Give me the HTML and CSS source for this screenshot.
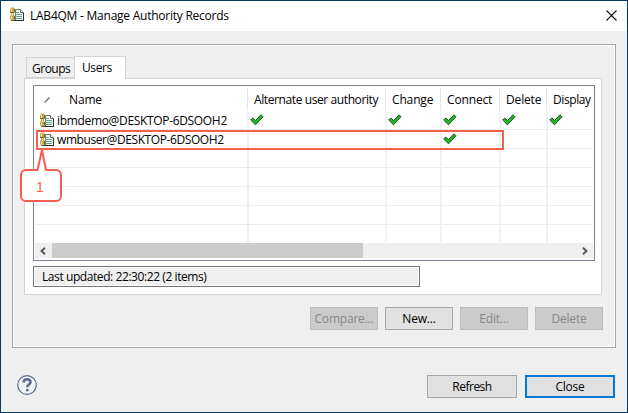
FILE: index.html
```html
<!DOCTYPE html>
<html lang="en">
<head>
<meta charset="utf-8">
<title>LAB4QM - Manage Authority Records</title>
<link rel="stylesheet" href="styles.css">
</head>
<body>
<svg class="defs" width="0" height="0">
  <symbol id="record" viewBox="0 0 14 15">
    <path d="M5.500 2.500h5l3 3v8h-8z" fill="#f4fbf7" stroke="#6b7872"/>
    <path d="M10.500 2.500v3h3" fill="#fff" stroke="#666"/>
    <path d="M5 5.500h4M5 7.500h7M5 9.500h7M5 11.500h7" stroke="#62a08f"/>
    <path d="M4 13.500h10M13.500 6v8" stroke="#26322d"/>
    <path d="M1 .5h3v1h1v4h-1v3h1v4h-1v1.500h-3v-1.500h-1v-4h1v-3h-1v-4h1z" fill="#c5a94c"/>
    <path d="M1.500 1.500v3M1.500 9.500v3M2.500 5v4" stroke="#f1e3a3"/>
    <path d="M4.500 2v3.500M4.500 9v3.500M0 5.500h4M1 13.500h3" stroke="#7b6325"/>
  </symbol>
  <symbol id="check" viewBox="0 0 14 12">
    <path d="M.7 6l2-2 2.800 2.500L11 .8l2 2L5.500 10.800z" fill="#25b52b" stroke="#17571b"/>
  </symbol>
</svg>
<div class="window">
  <header class="titlebar">
    <svg class="record"><use href="#record"/></svg>
    <span class="title">LAB4QM - Manage Authority Records</span>
    <svg class="close" viewBox="0 0 11 11"><path d="M.5.5l10 10M10.500.5l-10 10" stroke="#111" stroke-width="1.100"/></svg>
  </header>
  <main class="group">
    <nav class="tabs"><span class="tab groups">Groups</span><span class="tab active">Users</span></nav>
    <section class="page">
      <div class="table">
        <div class="row head">
          <span class="name"><svg class="sort" viewBox="0 0 6 6"><path d="M.5 5.500l5-5" stroke="#666" stroke-width="1.300"/></svg>Name</span>
          <span class="alt">Alternate user authority</span><span>Change</span><span>Connect</span><span>Delete</span><span class="display">Display</span>
        </div>
        <div class="row">
          <span class="user"><svg class="record"><use href="#record"/></svg><b class="u1">ibmdemo@DESKTOP-6DSOOH2</b></span>
          <span><svg class="check"><use href="#check"/></svg></span><span><svg class="check"><use href="#check"/></svg></span><span><svg class="check"><use href="#check"/></svg></span><span><svg class="check"><use href="#check"/></svg></span><span><svg class="check"><use href="#check"/></svg></span>
        </div>
        <div class="row">
          <span class="user"><svg class="record"><use href="#record"/></svg><b class="u2">wmbuser@DESKTOP-6DSOOH2</b></span>
          <span></span><span></span><span><svg class="check"><use href="#check"/></svg></span><span></span><span></span>
        </div>
        <div class="row"><span></span><span></span><span></span><span></span><span></span><span></span></div>
        <div class="row"><span></span><span></span><span></span><span></span><span></span><span></span></div>
        <div class="row"><span></span><span></span><span></span><span></span><span></span><span></span></div>
        <div class="row"><span></span><span></span><span></span><span></span><span></span><span></span></div>
        <div class="row last"><span></span><span></span><span></span><span></span><span></span><span></span></div>
        <div class="scroll">
          <svg class="arrow" viewBox="0 0 6 8"><path d="M5 .8L1.500 4 5 7.200" fill="none" stroke="#555" stroke-width="1.900"/></svg>
          <div class="thumb"></div>
          <svg class="arrow" viewBox="0 0 6 8"><path d="M1 .8L4.500 4 1 7.200" fill="none" stroke="#555" stroke-width="1.900"/></svg>
        </div>
      </div>
      <div class="status"><span>Last updated: 22:30:22 (2 items)</span></div>
    </section>
    <div class="actions">
      <button class="compare" disabled>Compare...</button><button>New...</button><button disabled>Edit...</button><button disabled>Delete</button>
    </div>
  </main>
  <footer class="footer">
    <svg class="help" viewBox="0 0 20 20"><circle cx="10" cy="10" r="9.300" fill="#f1f3f6" stroke="#5b6f8f" stroke-width="1.200"/><path d="M6.600 7.600C6.700 5.400 8 4.300 10 4.300c2.200 0 3.500 1.100 3.500 2.900 0 2.400-3.300 2.300-3.300 5.100" fill="none" stroke="#566b8c" stroke-width="2.500"/><path d="M9 14h2.500v2.300h-2.500z" fill="#566b8c"/></svg>
    <button>Refresh</button><button class="default">Close</button>
  </footer>
  <div class="highlight"></div>
  <div class="callout"><svg viewBox="0 0 42 54"><path d="M6 22H17.500L22 2l4 20H36a5 5 0 0 1 5 5V48a5 5 0 0 1-5 5H6a5 5 0 0 1-5-5V27a5 5 0 0 1 5-5z" fill="#fff" stroke="#f25f52" stroke-width="2"/></svg><span>1</span></div>
</div>
</body>
</html>
```
FILE: styles.css
```css
* { box-sizing: border-box; }
body { margin: 0; font: 12px/16px "Open Sans", "Noto Sans", sans-serif; color: #000; }
svg { display: block; flex: none; }
.defs { position: absolute; }
.window { position: relative; width: 628px; height: 413px; border: 1px solid #003c68; background: #efefef; overflow: hidden; }
.titlebar { height: 30px; display: flex; align-items: center; padding: 0 9px; background: #fff; }
.record { width: 14px; height: 15px; }
.titlebar .record { margin-top: -3px; }
.title { margin-left: 6px; letter-spacing: -.24px; white-space: nowrap; }
.close { width: 11px; height: 11px; margin-left: auto; margin-right: 1px; margin-top: -2px; }
.group { height: 304px; margin: 13px 11px 0; border: 1px solid #a5a5aa; box-shadow: inset 0 0 0 1px #fff; padding: 11px 13px 0 11px; }
.tabs { display: flex; align-items: flex-end; height: 23px; padding-left: 2px; margin-bottom: -1px; position: relative; }
.tab { height: 21px; border: 1px solid #d5d5d5; border-right: 0; padding-left: 5px; line-height: 21px; letter-spacing: -.45px; margin-bottom: 1px; }
.groups { width: 48px; }
.tab.active { width: 52px; height: 23px; margin-bottom: 0; border-right: 1px solid #d5d5d5; border-bottom: 0; background: #fff; padding-left: 7px; line-height: 21px; letter-spacing: -.4px; }
.groups { letter-spacing: -.5px; }
.page { width: 578px; height: 217px; background: #fff; border: 1px solid #d5d5d5; padding: 6px 0 0 8px; }
.table { width: 562px; height: 176px; border: 1px solid #7b8490; padding: 0 1px; }
.row { display: grid; grid-template-columns: 212px 138px 55px 59px 47px 47px; height: 19px; border-bottom: 1px solid #ededed; }
.row span { border-left: 2px solid #eaf1f9; display: flex; align-items: center; min-width: 0; white-space: nowrap; }
.row span:first-child { border-left: 0; }
.head { height: 25px; border-bottom: 0; padding-top: 1px; }
.head span { border-left: 1px solid #e5e5e5; padding: 2px 0 0 6px; letter-spacing: -.15px; height: 23px; }
.head .name { padding-left: 9px; }
.head .alt { letter-spacing: -.4px; }
.head .display { letter-spacing: -.4px; }
.sort { width: 6px; height: 6px; margin-right: 19px; }
.row .user { padding-left: 5px; }
.row b { font-weight: 400; margin: 2px 0 0 3px; }
.u1 { letter-spacing: -.33px; }
.u2 { letter-spacing: -.41px; }
.check { width: 14px; height: 12px; margin-left: 1px; }
.last { height: 17px; border-bottom: 0; }
.scroll { height: 15px; margin-top: 1px; display: flex; align-items: center; background: #efefef; padding: 0 5px; }
.thumb { width: 311px; height: 15px; background: #cbcbcb; margin: 0 auto 0 6px; }
.arrow { width: 6px; height: 8px; }
.status { width: 387px; height: 21px; margin-top: 5px; border: 1px solid #74777a; background: #efefef; box-shadow: inset 0 0 0 1px #fff; padding-left: 8px; line-height: 20px; letter-spacing: -.42px; }
.actions { display: flex; justify-content: flex-end; gap: 7px; margin-top: 12px; margin-right: -1px; }
button { font: inherit; letter-spacing: -.2px; width: 68px; height: 23px; padding: 0; border: 1px solid #a8a8a8; background: #e1e1e1; color: #000; white-space: nowrap; }
button:disabled { background: #cbcbcb; border-color: #bcbcbc; color: #888; }
.footer { display: flex; gap: 8px; padding: 27px 12px 0 16px; }
.help { width: 20px; height: 20px; margin-right: auto; }
.footer button { width: 90px; letter-spacing: -.5px; }
.footer .default { border: 2px solid #0078d7; letter-spacing: -.3px; }
.highlight { position: absolute; left: 35px; top: 129px; width: 468px; height: 20px; border: 2px solid #f25f52; }
.callout { position: absolute; left: 19px; top: 147px; width: 42px; height: 54px; }
.callout span { position: absolute; left: 16px; top: 31px; font: 14px/16px "Liberation Sans", sans-serif; color: #f25f52; }
```
